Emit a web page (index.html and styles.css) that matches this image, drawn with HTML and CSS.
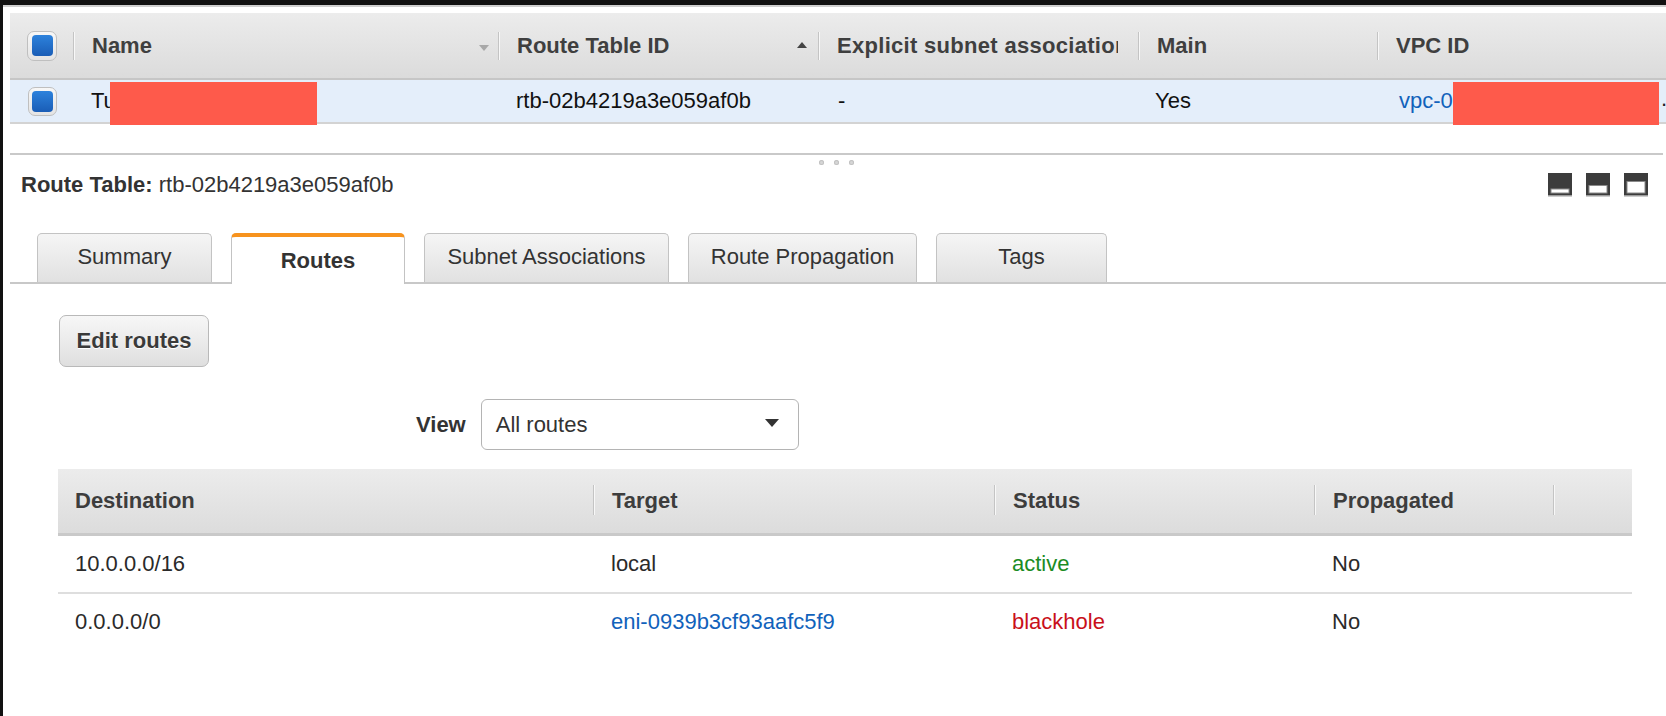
FILE: index.html
```html
<!DOCTYPE html>
<html lang="en">
<head>
<meta charset="utf-8">
<title>Route Tables</title>
<link rel="stylesheet" href="styles.css">
</head>
<body>
<div class="page">
  <div class="grid">
    <div class="gh gh-check"><span class="cb"><span class="cb-in"></span></span></div>
    <div class="gh sep">Name<span class="sort sort-down"></span></div>
    <div class="gh sep">Route Table ID<span class="sort sort-up"></span></div>
    <div class="gh sep"><span class="clip">Explicit subnet associations</span></div>
    <div class="gh sep">Main</div>
    <div class="gh sep">VPC ID</div>

    <div class="gc gc-check"><span class="cb"><span class="cb-in"></span></span></div>
    <div class="gc rel">Tu<span class="redact redact-name"></span></div>
    <div class="gc">rtb-02b4219a3e059af0b</div>
    <div class="gc gc-dash">-</div>
    <div class="gc gc-main">Yes</div>
    <div class="gc gc-vpc rel"><a class="link">vpc-0</a><span class="redact redact-vpc"></span><span class="dot-end">.</span></div>
  </div>

  <div class="resizer"></div>
  <div class="grip"><span></span><span></span><span></span></div>

  <div class="titlebar">
    <div class="title"><b>Route Table:</b> rtb-02b4219a3e059af0b</div>
    <div class="layout-icons">
      <svg width="24" height="24" viewBox="0 0 24 24"><rect width="24" height="22" fill="#3c3c3c"/><rect y="22" width="24" height="1.5" fill="#9c9c9c"/><rect x="3" y="16" width="18" height="4" fill="#fff" stroke="#8a8a8a" stroke-width="1"/></svg>
      <svg width="24" height="24" viewBox="0 0 24 24"><rect width="24" height="22" fill="#3c3c3c"/><rect y="22" width="24" height="1.5" fill="#9c9c9c"/><rect x="3" y="12.5" width="18" height="7.5" fill="#fff" stroke="#8a8a8a" stroke-width="1"/></svg>
      <svg width="24" height="24" viewBox="0 0 24 24"><rect width="24" height="22" fill="#3c3c3c"/><rect y="22" width="24" height="1.5" fill="#9c9c9c"/><rect x="3" y="8.5" width="18" height="11.5" fill="#fff" stroke="#8a8a8a" stroke-width="1"/></svg>
    </div>
  </div>

  <div class="tabs">
    <div class="tab t-summary">Summary</div>
    <div class="tab active t-routes">Routes</div>
    <div class="tab t-subnet">Subnet Associations</div>
    <div class="tab t-prop">Route Propagation</div>
    <div class="tab t-tags">Tags</div>
  </div>

  <div class="actions">
    <button class="btn">Edit routes</button>
  </div>

  <div class="viewrow">
    <span class="viewlabel">View</span>
    <div class="select"><span>All routes</span>
      <svg width="26" height="10" viewBox="0 0 26 10"><path d="M6 1 H20 L13 9 Z" fill="#333"/></svg>
    </div>
  </div>

  <div class="rtable">
    <div class="rh">Destination</div>
    <div class="rh sep2">Target</div>
    <div class="rh sep2">Status</div>
    <div class="rh sep2">Propagated</div>
    <div class="rh sep2"></div>

    <div class="rc first">10.0.0.0/16</div>
    <div class="rc">local</div>
    <div class="rc green">active</div>
    <div class="rc">No</div>
    <div class="rc"></div>

    <div class="rc first last">0.0.0.0/0</div>
    <div class="rc last"><a class="link">eni-0939b3cf93aafc5f9</a></div>
    <div class="rc last red">blackhole</div>
    <div class="rc last">No</div>
    <div class="rc last"></div>
  </div>
</div>
</body>
</html>
```

FILE: styles.css
```css
html, body {
  margin: 0;
  padding: 0;
  height: 716px;
  overflow: hidden;
  background: #121212;
}
body {
  font-family: "Liberation Sans", Arial, Helvetica, sans-serif;
  font-size: 22px;
  line-height: 26px;
  color: #222;
}
.page {
  margin: 5px 0 0 3px;
  height: 711px;
  background: #fff;
  border-top: 2px solid #cfcfcf;
  box-sizing: border-box;
  overflow: hidden;
}

/* top grid */
.grid {
  margin: 6px 0 0 7px;
  display: grid;
  grid-template-columns: 63px 425px 320px 320px 239px 1fr;
}
.gh {
  position: relative;
  height: 65px;
  display: flex;
  align-items: center;
  padding-left: 19px;
  font-weight: bold;
  color: #3f3f3f;
  background: linear-gradient(#ececec, #dbdbdb);
  border-bottom: 2px solid #c6c6c6;
  white-space: nowrap;
}
.clip {
  display: block;
  width: 281px;
  overflow: hidden;
  white-space: nowrap;
  letter-spacing: 0.3px;
}
.sep::before, .sep2::before {
  content: "";
  position: absolute;
  left: 0;
  top: 19px;
  height: 28px;
  width: 1px;
  background: #c4c4c4;
  box-shadow: 1px 0 0 #f8f8f8;
}
.gh-check { padding-left: 17px; }
.cb {
  box-sizing: border-box;
  width: 30px;
  height: 30px;
  border: 1px solid #bfbfbf;
  border-radius: 7px;
  background: linear-gradient(#f7f7f7, #e4e4e4);
  display: flex;
  align-items: center;
  justify-content: center;
}
.cb-in {
  width: 21px;
  height: 21px;
  border-radius: 4px;
  background: linear-gradient(#2d82dc, #1a5db6);
}
.sort {
  position: absolute;
  right: 11px;
  top: 29px;
  width: 0;
  height: 0;
  border-left: 5px solid transparent;
  border-right: 5px solid transparent;
}
.sort-down { border-top: 6px solid #a8a8a8; top: 32px; right: 9px; }
.sort-up { border-bottom: 6px solid #444; }

.gc {
  height: 42px;
  display: flex;
  align-items: center;
  padding-left: 18px;
  background: #e4eefa;
  border-bottom: 2px solid #d3d3d3;
  color: #111;
  white-space: nowrap;
}
.gc-check { padding-left: 18px; }
.gc-check .cb { width: 29px; height: 29px; }
.gc-dash { padding-left: 20px; }
.gc-main { padding-left: 17px; }
.gc-vpc { padding-left: 22px; }
.rel { position: relative; }
.redact {
  position: absolute;
  top: 2px;
  height: 43px;
  background: #fe5a4b;
}
.redact-name { left: 37px; width: 207px; }
.redact-vpc { left: 76px; width: 206px; }
.dot-end { position: absolute; left: 284px; top: 6px; color: #222; }
.link { color: #1162bb; text-decoration: none; }

/* resizer */
.resizer {
  margin: 29px 3px 0 7px;
  height: 2px;
  background: #c9c9c9;
}
.grip {
  margin-top: 5px;
  height: 5px;
  display: flex;
  justify-content: center;
  gap: 10px;
  padding-left: 3px;
}
.grip span {
  width: 5px;
  height: 5px;
  border-radius: 50%;
  background: #d6d6d6;
  box-shadow: inset 0 0 0 1px #c2c2c2;
}

/* title row */
.titlebar {
  margin-top: 7px;
  display: flex;
  justify-content: space-between;
  align-items: flex-start;
  padding: 0 18px 0 18px;
}
.title { color: #333; }
.title b { color: #333; }
.layout-icons {
  display: flex;
  gap: 14px;
  margin-top: 1px;
}
.layout-icons svg { display: block; }

/* tabs */
.tabs {
  margin: 35px 0 0 7px;
  padding-left: 27px;
  display: flex;
  gap: 19px;
  border-bottom: 2px solid #c8c8c8;
  height: 49px;
}
.tab {
  box-sizing: border-box;
  height: 49px;
  border: 1px solid #c3c3c3;
  border-bottom: none;
  border-radius: 5px 5px 0 0;
  background: linear-gradient(#f5f5f5, #e1e1e1);
  text-align: center;
  padding-top: 10px;
  color: #333;
}
.tab.active {
  height: 51px;
  background: #fff;
  border-top: 4px solid #f7931e;
  padding-top: 11px;
  font-weight: bold;
}
.t-summary { width: 175px; }
.t-routes { width: 174px; }
.t-subnet { width: 245px; }
.t-prop { width: 229px; }
.t-tags { width: 171px; }

/* actions */
.actions { margin: 31px 0 0 56px; }
.btn {
  box-sizing: border-box;
  width: 150px;
  height: 52px;
  border: 1px solid #b9b9b9;
  border-radius: 7px;
  background: linear-gradient(#f7f7f7, #dfdfdf);
  font-family: inherit;
  font-size: 22px;
  font-weight: bold;
  color: #3a3a3a;
  text-shadow: 0 1px 0 #fff;
  padding: 0;
  display: block;
}

.viewrow {
  margin: 32px 0 0 413px;
  display: flex;
  align-items: center;
  gap: 15px;
}
.viewlabel { font-weight: bold; color: #333; }
.select {
  box-sizing: border-box;
  width: 318px;
  height: 51px;
  border: 1px solid #b4b4b4;
  border-radius: 6px;
  background: #fff;
  display: flex;
  align-items: center;
  justify-content: space-between;
  padding: 0 13px 0 14px;
  color: #333;
}
.select svg { display: block; margin-top: -3px; }

/* routes table */
.rtable {
  margin: 19px 0 0 55px;
  width: 1574px;
  display: grid;
  grid-template-columns: 535px 401px 320px 239px 1fr;
}
.rh {
  position: relative;
  height: 64px;
  display: flex;
  align-items: center;
  padding-left: 19px;
  font-weight: bold;
  color: #3d3d3d;
  background: linear-gradient(#ececec, #dcdcdc);
  border-bottom: 3px solid #c9c9c9;
}
.rh:first-child { padding-left: 17px; }
.sep2::before { top: 16px; height: 30px; }
.rc {
  height: 56px;
  display: flex;
  align-items: center;
  padding-left: 18px;
  border-bottom: 2px solid #dedede;
  color: #2a2a2a;
}
.rc.first { padding-left: 17px; }
.rc.last { border-bottom: none; }
.green { color: #1b8c24; }
.red { color: #c9101a; }
```
